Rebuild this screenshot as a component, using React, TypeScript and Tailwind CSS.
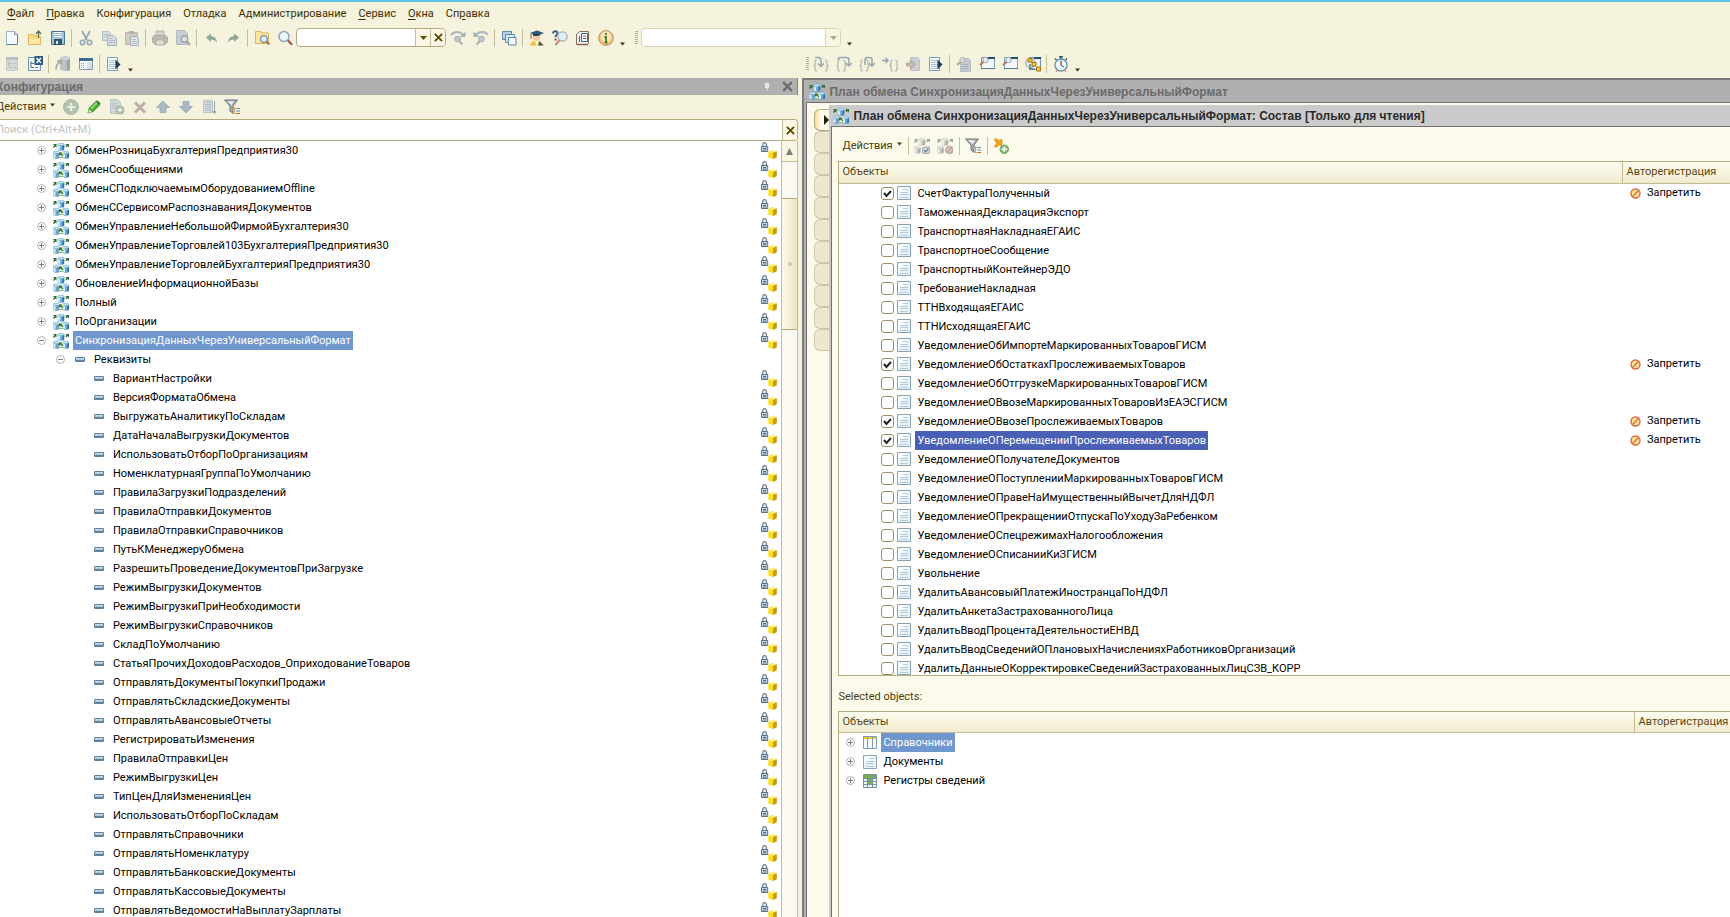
import React, { useState } from 'react';
import clsx from 'clsx';

type IconProps = { className?: string };
type TreeItem = { name: string; level: number; kind: 'plan' | 'attr'; expander?: 'plus' | 'minus'; locked?: boolean };
type DocItem = { name: string; checked?: boolean };

const PLAN_NAME = 'СинхронизацияДанныхЧерезУниверсальныйФормат';
const SELECTED_DOC = 'УведомлениеОПеремещенииПрослеживаемыхТоваров';

const plans = [
    'ОбменРозницаБухгалтерияПредприятия30',
    'ОбменСообщениями',
    'ОбменСПодключаемымОборудованиемOffline',
    'ОбменССервисомРаспознаванияДокументов',
    'ОбменУправлениеНебольшойФирмойБухгалтерия30',
    'ОбменУправлениеТорговлей103БухгалтерияПредприятия30',
    'ОбменУправлениеТорговлейБухгалтерияПредприятия30',
    'ОбновлениеИнформационнойБазы',
    'Полный',
    'ПоОрганизации',
];

const attributes = [
    'ВариантНастройки',
    'ВерсияФорматаОбмена',
    'ВыгружатьАналитикуПоСкладам',
    'ДатаНачалаВыгрузкиДокументов',
    'ИспользоватьОтборПоОрганизациям',
    'НоменклатурнаяГруппаПоУмолчанию',
    'ПравилаЗагрузкиПодразделений',
    'ПравилаОтправкиДокументов',
    'ПравилаОтправкиСправочников',
    'ПутьКМенеджеруОбмена',
    'РазрешитьПроведениеДокументовПриЗагрузке',
    'РежимВыгрузкиДокументов',
    'РежимВыгрузкиПриНеобходимости',
    'РежимВыгрузкиСправочников',
    'СкладПоУмолчанию',
    'СтатьяПрочихДоходовРасходов_ОприходованиеТоваров',
    'ОтправлятьДокументыПокупкиПродажи',
    'ОтправлятьСкладскиеДокументы',
    'ОтправлятьАвансовыеОтчеты',
    'РегистрироватьИзменения',
    'ПравилаОтправкиЦен',
    'РежимВыгрузкиЦен',
    'ТипЦенДляИзмененияЦен',
    'ИспользоватьОтборПоСкладам',
    'ОтправлятьСправочники',
    'ОтправлятьНоменклатуру',
    'ОтправлятьБанковскиеДокументы',
    'ОтправлятьКассовыеДокументы',
    'ОтправлятьВедомостиНаВыплатуЗарплаты',
];

const tree: TreeItem[] = [
    ...plans.map((name): TreeItem => ({ name, level: 0, kind: 'plan', expander: 'plus', locked: true })),
    { name: PLAN_NAME, level: 0, kind: 'plan', expander: 'minus', locked: true },
    { name: 'Реквизиты', level: 1, kind: 'attr', expander: 'minus' },
    ...attributes.map((name): TreeItem => ({ name, level: 2, kind: 'attr', locked: true })),
];

const documents: DocItem[] = [
    { name: 'СчетФактураПолученный', checked: true },
    { name: 'ТаможеннаяДекларацияЭкспорт' },
    { name: 'ТранспортнаяНакладнаяЕГАИС' },
    { name: 'ТранспортноеСообщение' },
    { name: 'ТранспортныйКонтейнерЭДО' },
    { name: 'ТребованиеНакладная' },
    { name: 'ТТНВходящаяЕГАИС' },
    { name: 'ТТНИсходящаяЕГАИС' },
    { name: 'УведомлениеОбИмпортеМаркированныхТоваровГИСМ' },
    { name: 'УведомлениеОбОстаткахПрослеживаемыхТоваров', checked: true },
    { name: 'УведомлениеОбОтгрузкеМаркированныхТоваровГИСМ' },
    { name: 'УведомлениеОВвозеМаркированныхТоваровИзЕАЭСГИСМ' },
    { name: 'УведомлениеОВвозеПрослеживаемыхТоваров', checked: true },
    { name: SELECTED_DOC, checked: true },
    { name: 'УведомлениеОПолучателеДокументов' },
    { name: 'УведомлениеОПоступленииМаркированныхТоваровГИСМ' },
    { name: 'УведомлениеОПравеНаИмущественныйВычетДляНДФЛ' },
    { name: 'УведомлениеОПрекращенииОтпускаПоУходуЗаРебенком' },
    { name: 'УведомлениеОСпецрежимахНалогообложения' },
    { name: 'УведомлениеОСписанииКиЗГИСМ' },
    { name: 'Увольнение' },
    { name: 'УдалитьАвансовыйПлатежИностранцаПоНДФЛ' },
    { name: 'УдалитьАнкетаЗастрахованногоЛица' },
    { name: 'УдалитьВводПроцентаДеятельностиЕНВД' },
    { name: 'УдалитьВводСведенийОПлановыхНачисленияхРаботниковОрганизаций' },
    { name: 'УдалитьДанныеОКорректировкеСведенийЗастрахованныхЛицСЗВ_КОРР' },
];

/* ---------- icons ---------- */

const Svg: React.FC<React.PropsWithChildren<IconProps>> = ({ className, children }) => (
    <svg viewBox="0 0 16 16" className={clsx('size-4 shrink-0', className)} fill="none" aria-hidden="true">{children}</svg>
);

const Cylinder: React.FC<{ x: number; y: number }> = ({ x, y }) => (
    <g transform={`translate(${x} ${y})`}>
        <path d="M0 1.2v5c0 .9 1.300 1.500 3.250 1.500s3.250-.6 3.250-1.500v-5z" fill="#69a8d6" />
        <path d="M.4 1.500v4.800c.5.500 1.200.8 2.100.9V2z" fill="#d8eefa" />
        <path d="M4.800 2v5.400c1-.2 1.700-.6 1.700-1.200v-5z" fill="#2f70a6" />
        <ellipse cx="3.250" cy="1.400" rx="3.100" ry="1.300" fill="#bfe1f5" stroke="#5b9ac6" strokeWidth=".5" />
    </g>
);

const PlanIcon: React.FC<IconProps> = ({ className }) => (
    <Svg className={className}>
        <Cylinder x={4.7} y={0} />
        <Cylinder x={0} y={8} />
        <Cylinder x={9.5} y={8} />
        <path d="M0 1h3.500v3.500L2.400 3.400 1 5 0 4l1.400-1.600zM16 1h-3.500l1 1-1.200 1.200 1 1 1.200-1.200L16 4.500z" fill="#2f6b2c" />
        <path d="M5.500 9h4.800v6H5.500z" fill="#e3f0dc" />
        <path d="M5.800 9.500h3.700l-1 1 1.800 1.800-1 1-1.800-1.800-1.700 1.700z" fill="#2b6f28" />
        <path d="M6 14.500h4" stroke="#86b681" />
    </Svg>
);

const DocIcon: React.FC<IconProps> = ({ className }) => (
    <svg viewBox="0 0 14 14" className={clsx('size-[14px] shrink-0', className)} fill="none" aria-hidden="true">
        <path d="M.5.5h13v13H.5z" fill="#e6f1f8" stroke="#8aa2b4" />
        <path d="M1 1h11L1 11z" fill="#fafdfe" />
        <path d="M6 3.500h5M3 6.500h8M3 8.500h8M3 11.500h8" stroke="#b3cddd" />
    </svg>
);

const AttrIcon = () => (
    <svg viewBox="0 0 10 5" className="h-[5px] w-[10px] shrink-0" aria-hidden="true">
        <rect width="10" height="5" rx="1" fill="#5f8299" />
        <path d="M1 1h8v2H1z" fill="#a9c9dc" />
        <path d="M1 1.500h8" stroke="#c4dcea" />
    </svg>
);

const LockIcon = () => (
    <svg viewBox="0 0 16 17" className="h-[17px] w-4 shrink-0" fill="none" aria-hidden="true">
        <path d="M1.800 5V2.600C1.800 1.300 2.600.7 3.600.7s1.800.6 1.800 1.900V5" stroke="#5f7284" strokeWidth="1.200" />
        <path d="M.5 4.500h6.200v5H.5z" fill="#c4d4e0" stroke="#5a7083" />
        <path d="M2 6.500h3.200M2 8h3.200" stroke="#5b7489" />
        <path d="M7.300 9.300 11.500 7.800l4.300 1.400-3.800 1.600z" fill="#fff07a" />
        <path d="M7.300 9.300 12 10.800V17l-4.700-1.600z" fill="#fadf22" />
        <path d="M12 10.800 15.800 9.200v6L12 17z" fill="#c79a10" />
    </svg>
);

const Expander: React.FC<{ open?: boolean }> = ({ open }) => (
    <svg viewBox="0 0 9 9" className="size-[9px] shrink-0" fill="none" aria-hidden="true">
        <circle cx="4.500" cy="4.500" r="4" fill="#fff" stroke="#b0b0b0" />
        <path d={open ? 'M2 4.500h5' : 'M2 4.500h5M4.500 2v5'} stroke="#7c7c7c" />
    </svg>
);

const ForbidIcon = () => (
    <svg viewBox="0 0 11 11" className="size-[11px] shrink-0" aria-hidden="true">
        <circle cx="5.500" cy="5.500" r="4.500" fill="#ffe49a" stroke="#dc6a3c" strokeWidth="1.400" />
        <path d="m2.600 8.400 5.800-5.800" stroke="#dc6a3c" strokeWidth="1.400" />
    </svg>
);

const Caret: React.FC<IconProps> = ({ className }) => (
    <svg viewBox="0 0 7 4" className={clsx('h-1 shrink-0', className ?? 'w-[7px]')} aria-hidden="true"><path d="M0 0h7L3.500 4z" fill="currentColor" /></svg>
);

const Cross: React.FC<IconProps> = ({ className }) => (
    <svg viewBox="0 0 10 10" className={clsx('shrink-0', className)} fill="none" aria-hidden="true"><path d="m1 1 8 8M9 1 1 9" stroke="currentColor" strokeWidth="2" /></svg>
);

const NewIcon = () => (
    <Svg><path d="M2.500 1.500h8l3 3v10h-11z" fill="#f4fafd" stroke="#9db6c7" /><path d="M2.500 14.500h11V5" stroke="#5d7f98" /><path d="M10.500 1.500v3h3" fill="#c4dae8" stroke="#7f9db2" /></Svg>
);
const OpenIcon = () => (
    <Svg><path d="M1.500 14.500v-10h5l1 1.500h5l1 1v7.500z" fill="#fbdc86" stroke="#dfb356" /><path d="M2 9h11v5H2z" fill="#ffe9a8" /><path d="M11.500 8V2M9 4l2.500-3L14 4" stroke="#5a6d50" strokeWidth="1.200" /></Svg>
);
const SaveIcon = () => (
    <Svg><path d="M1.500 1.500h13v13h-13z" fill="#a3c3d8" stroke="#4b748f" /><path d="M4 2h8v5H4z" fill="#f2f8fb" /><path d="M4 3.500h8M4 5.500h8" stroke="#9ab3c3" /><path d="M4.500 9.500h7v5h-7z" fill="#365b74" stroke="#2c4c62" /><path d="M6 11h2v3H6z" fill="#e3eef5" /></Svg>
);
const CutIcon = () => (
    <Svg><path d="m4 1 5 9M12 1l-5 9" stroke="#93a7b4" strokeWidth="1.800" /><circle cx="4.500" cy="12.500" r="2.200" stroke="#93a7b4" strokeWidth="1.600" /><circle cx="11.500" cy="12.500" r="2.200" stroke="#93a7b4" strokeWidth="1.600" /></Svg>
);
const CopyIcon = () => (
    <Svg><path d="M1.500 1.500h6l2 2v7h-8z" fill="#d5dde0" stroke="#b3bfc6" /><path d="M3 4.500h4M3 6.500h4" stroke="#b3bfc6" /><path d="M6.500 5.500h6l3 3v7h-9z" fill="#d5dde0" stroke="#a3b2bb" /><path d="M8 8.500h4M8 10.500h6M8 12.500h6" stroke="#b3bfc6" /></Svg>
);
const PasteIcon = () => (
    <Svg><path d="M1.500 2.500h12v12h-12z" fill="#d3ccbf" stroke="#bdb4a4" /><path d="M5 1h5v3H5z" fill="#a9b4ba" /><path d="M6.500 6.500h6l2 2v7h-8z" fill="#dfe5e7" stroke="#a3b2bb" /><path d="M8 9.500h4M8 11.500h5M8 13.500h5" stroke="#b3bfc6" /></Svg>
);
const PrintIcon = () => (
    <Svg><path d="M4 1h8v5H4z" fill="#cdd3d5" stroke="#b3babc" /><path d="M2 5.500h12l1.500 2v4.500L13 14.500H3L.5 12V7.500z" fill="#bcbab4" stroke="#aba9a3" /><path d="M4 10h8v5H4z" fill="#e2dbd2" stroke="#b5ab9f" /><path d="M12 8h1.500" stroke="#c08f76" strokeWidth="1.500" /></Svg>
);
const PreviewIcon = () => (
    <Svg><path d="M1.500.5h8l3 3v11h-11z" fill="#c8cfd3" stroke="#b3bec4" /><circle cx="9.500" cy="9" r="3.200" fill="#dbe1e3" stroke="#98a3aa" strokeWidth="1.400" /><path d="m12 11.500 3 3.500" stroke="#b69a8c" strokeWidth="2" /></Svg>
);
const UndoIcon = () => (
    <Svg><path d="M3 7.500 8 3.500v2.700c3.500 0 5.500 2 6 6.300-2-2.300-3.500-2.900-6-2.900v2.400z" fill="#8ea898" /></Svg>
);
const RedoIcon = () => (
    <Svg><path d="M13 7.500 8 3.500v2.700c-3.500 0-5.500 2-6 6.300 2-2.300 3.500-2.900 6-2.900v2.400z" fill="#8ea898" /></Svg>
);
const FindFolderIcon = () => (
    <Svg><path d="M1.500 13.500v-12h5l1 1.500h7v10.500z" fill="#fde7a0" stroke="#dcb45a" /><circle cx="10" cy="9" r="3.300" fill="#dfeffa" stroke="#7c93ab" strokeWidth="1.300" /><path d="m12.500 11.500 2.800 3" stroke="#b06a50" strokeWidth="2" /></Svg>
);
const MagnifierIcon = () => (
    <Svg><circle cx="7" cy="6.500" r="5" fill="#eaf4fb" stroke="#8fa3ba" strokeWidth="1.500" /><path d="M4.500 6a3 3 0 0 1 3-2.500" stroke="#fff" /><path d="m10.800 10.200 4.200 4.600" stroke="#a3564a" strokeWidth="2.200" /></Svg>
);
const FindNextIcon: React.FC<IconProps> = ({ className }) => (
    <Svg className={className}><path d="M1 5c3-4 9-4 12 0" stroke="#a9b6bf" strokeWidth="2" /><path d="M15.500 1.500V7H10z" fill="#a3b1ba" /><circle cx="7.500" cy="9" r="2.700" fill="#c3c7d3" stroke="#aeb5c0" strokeWidth="1.300" /><path d="m9.500 11.500 3 3" stroke="#b9a7a3" strokeWidth="2" /></Svg>
);
const WindowsIcon = () => (
    <Svg><path d="M1.500 1.500h9v8h-9z" fill="#b5d2e3" stroke="#5f8ba6" /><path d="M4.500 4.500h9v8h-9z" fill="#d8e9f2" stroke="#5f8ba6" /><path d="M7.500 7.500h7.500v7.500H7.500z" fill="#f5fafc" stroke="#5f8ba6" /></Svg>
);
const StudentIcon = () => (
    <Svg><circle cx="7.500" cy="7" r="3.500" fill="#f7c99b" /><path d="M1 15.500c.5-3.500 3-5 6-5s6.500 1.500 7.500 5z" fill="#f0c544" /><path d="m6 11 2 4.500 2-4.500z" fill="#fff" /><path d="m10 11 4.500 4.500h-5z" fill="#2d5672" /><path d="M1 3 8 .5 15 3 8 6z" fill="#2c5a7c" /><path d="M4 4v2l7-.5V4z" fill="#1d4059" /><path d="M2 3.500V9" stroke="#a0602c" /></Svg>
);
const HelpSearchIcon = () => (
    <Svg><path d="M1 3.500C1 .5 6 .5 5.500 3.500 5.300 5 3.500 5 3.500 7M3.500 8.500v2" stroke="#2c5a7c" strokeWidth="1.800" /><circle cx="10.500" cy="6.500" r="4.700" fill="#dceefa" stroke="#b3a9ab" strokeWidth="1.300" /><path d="m7.500 10-4 5" stroke="#c98e77" strokeWidth="2.200" /></Svg>
);
const BookIcon = () => (
    <Svg><path d="M4.500 1.500h9v12l-1 1h-11v-10z" fill="#eef5fa" stroke="#8a6a58" /><path d="M2 14.500h11" stroke="#9a5b40" strokeWidth="1.500" /><path d="M6.500 3.500h6v8h-6z" fill="#fff" stroke="#2d6690" /><path d="M8 6h3" stroke="#c64734" /><path d="M8 8.500h3" stroke="#2d6690" /><path d="M4.500 6v6" stroke="#2d6690" /></Svg>
);
const InfoIcon = () => (
    <Svg><circle cx="8" cy="8" r="7.300" fill="#fbc77c" stroke="#b48757" /><circle cx="8" cy="6.500" r="5.200" fill="#fde5bd" /><path d="M8 3v2M6.500 7H8v5.500M6.500 12.500h3" stroke="#3f7a2d" strokeWidth="1.800" /></Svg>
);

const TreeDocIcon = () => (
    <Svg className="opacity-60"><path d="M2.500 1.500h11v13h-11z" fill="#c3cbd0" stroke="#a6b3bb" /><path d="M2 2.500h12" stroke="#8397a5" strokeWidth="2" /><path d="M5 5v6.500h3M5 7.500h3M9.500 7.500h3M9.500 11.500h3" stroke="#8595a0" /></Svg>
);
const TreeCloseIcon = () => (
    <Svg><path d="M1.500 1.500h12v13h-12z" fill="#f4f9fc" stroke="#6b93ad" /><path d="M4 5v6.500h3M4 7.500h3M8 11.500h3" stroke="#53718a" /><path d="M7.500 0H16v9H7.500z" fill="#275b7f" /><path d="m9.500 2 4.500 5m0-5-4.500 5" stroke="#fff" strokeWidth="1.400" /></Svg>
);
const DbIcon = () => (
    <Svg><path d="M5 2v11c0 1.300 2.500 2 5 2s5-.7 5-2V2z" fill="#bac2c7" /><path d="M12 3v12c2-.3 3-1 3-2V2z" fill="#98a4ac" /><ellipse cx="10" cy="2.500" rx="5" ry="1.800" fill="#d0d6d9" stroke="#a2adb4" strokeWidth=".6" /><path d="M1 14c0-4 1-6.500 4-8M2 5l4-.5V8" stroke="#9bab9e" strokeWidth="1.500" /></Svg>
);
const PaletteIcon = () => (
    <Svg><path d="M1.500 2.500h13v11h-13z" fill="#fafcfd" stroke="#7f9bae" /><path d="M1 2h14v3H1z" fill="#3f6c8b" /><path d="M9 6h5v7H9z" fill="#cfdee8" /><path d="M3 7.500h4M3 9.500h4M3 11.500h4" stroke="#b4945e" strokeDasharray="1 1" /></Svg>
);
const DebugDocIcon = () => (
    <Svg><path d="M1.500 1.500h10v13h-10z" fill="#f8fbfd" stroke="#7ba1b9" /><path d="M3 4.500h7M3 6.500h7M3 8.500h7M3 10.500h7M3 12.500h7" stroke="#a9c3d4" /><path d="M9.500 3.500v10l5-5z" fill="#1d3e56" /></Svg>
);
// braces stand at l and r, the arrow shows where the debugger steps
const BraceIcon: React.FC<{ l: number; r: number; arrow: string }> = ({ l, r, arrow }) => (
    <Svg>
        <path d={`M${l + 3} 4q-2 0-2 2v2.500l-1 1 1 1v2.500q0 2 2 2M${r - 3} 4q2 0 2 2v2.500l1 1-1 1v2.500q0 2-2 2`} stroke="#b3b5b0" strokeWidth="1.200" />
        <path d={arrow} stroke="#96a7b2" strokeWidth="1.500" />
    </Svg>
);
const RunToIcon = () => (
    <Svg><path d="M5.500 1.500h7l2 2v11h-9z" fill="#c9cfd2" stroke="#bac3c7" /><path d="M1.500 7h4V4l5 4.500-5 4.500v-3h-4z" fill="#cdb9ae" stroke="#b5a49a" /></Svg>
);
const FindDocIcon = () => (
    <Svg><path d="M4.500 2.500h8l2 2v11h-10z" fill="#c5cbce" stroke="#b5bec2" /><path d="M6 8.500h6M6 10.500h6M6 12.500h6" stroke="#a9b3b9" /><circle cx="6.500" cy="4" r="2.700" fill="#d5dadc" stroke="#aeb2b5" /><path d="M4.500 6 1 9" stroke="#bc9f94" strokeWidth="1.800" /></Svg>
);
const FindWindowIcon = () => (
    <Svg><path d="M2.500 1.500h13v11h-13z" fill="#f2f8fb" stroke="#7ba0b8" /><path d="M9 1h7v2H9z" fill="#1f5276" /><path d="M2 12.500h14" stroke="#4f7d9b" /><circle cx="6.500" cy="4" r="2.700" fill="#e4eff7" stroke="#9aa4b4" /><path d="M4.500 6 1 9" stroke="#bb7362" strokeWidth="1.800" /></Svg>
);
const StackIcon = () => (
    <Svg><path d="M4.500 1.500h11v12h-11z" fill="#eaf2f7" stroke="#7696ab" /><path d="M9 1h7v2H9z" fill="#1f5276" /><circle cx="5.500" cy="7" r="4.700" fill="#e3edf4" stroke="#8d9aa5" /><path d="M3 2.500h4v3.500H3zM7 6.500h4V10H7zM11.500 11h4v4h-4z" fill="#f7c535" stroke="#a77513" /><path d="M5 8v5h5" stroke="#39668b" strokeWidth="1.200" /></Svg>
);
const TimerIcon = () => (
    <Svg><circle cx="8" cy="9" r="6" fill="#eff6fa" stroke="#6a8ca3" strokeWidth="1.300" /><path d="M6 .8h4M8 1v2M2 2.500l1.500 1.500M14 2.500 12.500 4" stroke="#365a74" strokeWidth="1.400" /><path d="M8 4.500v4.800l3 1.700" stroke="#2e5674" /><path d="M8 5.500v3.500" stroke="#d15246" /><path d="M4 14.500 3 16M12 14.500l1 1.500" stroke="#c0523f" /></Svg>
);

const AddIcon = () => (
    <Svg><circle cx="8" cy="8" r="7.500" fill="#b3c2ac" stroke="#a9b9a3" /><path d="M8 4v8M4 8h8" stroke="#e9eee2" strokeWidth="2.200" /></Svg>
);
const PencilIcon = () => (
    <Svg><path d="m2 14 1.500-5L10 2.500l3.500 3.500L7 12.500z" fill="#4cb733" stroke="#27731f" /><path d="m5 9.500 6-6" stroke="#a9e68e" strokeWidth="1.500" /><path d="m2 14 1.200-3.800L6 13z" fill="#d9f2c2" /><path d="m10 2.500 1.200-1.200 3.500 3.500L13.500 6z" fill="#1e6d1c" /></Svg>
);
const AddDocIcon = () => (
    <Svg><path d="M1.500.5h7l3 3v11h-10z" fill="#cfd6d4" stroke="#b8c2c4" /><path d="M3 4.500h5M3 6.500h6M3 8.500h6" stroke="#b8c2c5" /><circle cx="11" cy="11" r="4.500" fill="#a8bba0" /><path d="M11 8.500v5M8.500 11h5" stroke="#eef2e8" strokeWidth="1.600" /></Svg>
);
const DeleteIcon = () => (
    <Svg><path d="m3 3.500 10 10M13 3.500l-10 10" stroke="#bfaeaa" strokeWidth="3" /></Svg>
);
const UpIcon: React.FC<IconProps> = ({ className }) => (
    <Svg className={className}><path d="M8 2l6.500 6.500H11v5H5v-5H1.500z" fill="#a9bac5" stroke="#9db0bc" /></Svg>
);
const SortIcon = () => (
    <Svg><path d="M2.500 1.500h9v12h-9z" fill="#d5dbdc" stroke="#bac3c6" /><path d="M4 3.500h6M4 5.500h6M4 7.500h6M4 9.500h6M4 11.500h6" stroke="#b3bdc3" /><path d="M13.500 2v11M12 12.500l1.500 2 1.500-2z" stroke="#98a8b3" fill="#98a8b3" /></Svg>
);
const FilterIcon = () => (
    <Svg><path d="M.5 1h13L9 7v7.500L6 12V7z" fill="#a9adb0" stroke="#70757a" /><path d="M3 2.200h7L7.500 6z" fill="#edf0f1" /><path d="M10.500 8v7M11 9.500h2M11 14.500h2" stroke="#d0ab68" /><path d="M13 9.500h3M12 12h4" stroke="#4b91c1" strokeWidth="1.200" /><path d="M13 14.500h3" stroke="#c95c3a" /></Svg>
);
const PlanCheckIcon: React.FC<{ forbid?: boolean }> = ({ forbid }) => (
    <Svg>
        <g className="opacity-55 grayscale"><Cylinder x={4.7} y={0} /><Cylinder x={0} y={8} /><Cylinder x={9.500} y={8} /></g>
        <path d="M0 1h3.500v3.500L2.400 3.400 1 5 0 4l1.400-1.600zM16 1h-3.500l1 1-1.200 1.200 1 1 1.200-1.200L16 4.500z" fill="#93a78d" />
        {forbid
            ? <><circle cx="12" cy="12" r="3.500" fill="#d8c4bb" stroke="#b39a90" /><path d="m9.500 14.500 5-5" stroke="#b39a90" /></>
            : <><path d="M8.500 9.500h7v6h-7z" fill="#d4dadd" stroke="#a6b4bc" /><path d="m10 12 1.500 2 3-3.500" stroke="#758a99" strokeWidth="1.300" /></>}
    </Svg>
);
const AddRefIcon = () => (
    <Svg><path d="M1 1h3l2 1.500L9 1v7l-2.500-1L4 9l-3-.500 2.500-3z" fill="#f5a51c" stroke="#d88409" strokeWidth=".6" /><circle cx="11.300" cy="11.300" r="4.200" fill="#7dbd68" stroke="#6a9a5a" /><path d="M11.300 8.500v5.600M8.500 11.300h5.600" stroke="#fff" strokeWidth="1.600" /></Svg>
);
const CatalogIcon = () => (
    <svg viewBox="0 0 14 14" className="size-[14px] shrink-0" fill="none" aria-hidden="true"><path d="M.5.5h13v12H.5z" fill="#f5fafd" stroke="#7f9bae" /><path d="M1 1h12v2H1z" fill="#ecc63d" /><path d="M4.500 1v12M9.500 1v12" stroke="#7f9bae" /></svg>
);
const RegisterIcon = () => (
    <svg viewBox="0 0 14 14" className="size-[14px] shrink-0" fill="none" aria-hidden="true"><path d="M.5.5h13v13H.5z" fill="#eff5f7" stroke="#7690a1" /><path d="M1 1h12v3H1zM5 5h4v5H5z" fill="#74b04f" /><path d="M1 4.500h12M1 7.500h12M1 10.500h12M4.500 1v12M9.500 1v12" stroke="#7690a1" /></svg>
);

/* ---------- toolbar parts ---------- */

const ToolButton: React.FC<React.PropsWithChildren<{ label: string; className?: string }>> = ({ label, className, children }) => (
    <button type="button" aria-label={label} title={label} className={clsx('flex h-6 shrink-0 items-center justify-center', className ?? 'w-[23px]')}>{children}</button>
);

const Sep = () => <span className="flex h-[18px] w-[5px] shrink-0 justify-center"><span className="w-px bg-[#c5bd9c]" /></span>;
const Grip = () => <span className="h-3.5 w-[3px] shrink-0 bg-[repeating-linear-gradient(#b5ad8c_0_1px,transparent_1px_2px)]" />;

const MoreButton = () => (
    <button type="button" aria-label="Ещё" className="flex h-5 w-[11px] shrink-0 items-end justify-center pb-0.5 text-[#3f2f00]"><Caret className="w-[5px]" /></button>
);

const ActionsButton: React.FC<IconProps> = ({ className }) => (
    <button type="button" className={clsx('flex shrink-0 items-center text-[#4a3a0a]', className)}>Действия<Caret className="-mt-1 ml-1 w-[5px]" /></button>
);

const menu: [string, string, string][] = [
    ['', 'Ф', 'айл'],
    ['', 'П', 'равка'],
    ['Конфигурация', '', ''],
    ['Отладка', '', ''],
    ['Администрирование', '', ''],
    ['', 'С', 'ервис'],
    ['', 'О', 'кна'],
    ['Сп', 'р', 'авка'],
];

const MenuBar = () => (
    <nav className="flex h-[23px] items-center gap-3 px-[7px] text-[#3f2f00]">
        {menu.map(([before, key, after]) => (
            <button key={before + key + after} type="button">{before}{key && <span className="underline underline-offset-2">{key}</span>}{after}</button>
        ))}
    </nav>
);

const MainToolbar = () => (
    <div className="flex h-[25px] items-center">
        <ToolButton label="Новый"><NewIcon /></ToolButton>
        <ToolButton label="Открыть"><OpenIcon /></ToolButton>
        <ToolButton label="Сохранить"><SaveIcon /></ToolButton>
        <Sep />
        <ToolButton label="Вырезать"><CutIcon /></ToolButton>
        <ToolButton label="Копировать"><CopyIcon /></ToolButton>
        <ToolButton label="Вставить"><PasteIcon /></ToolButton>
        <Sep />
        <ToolButton label="Печать"><PrintIcon /></ToolButton>
        <ToolButton label="Просмотр"><PreviewIcon /></ToolButton>
        <Sep />
        <ToolButton label="Отменить"><UndoIcon /></ToolButton>
        <ToolButton label="Вернуть"><RedoIcon /></ToolButton>
        <Sep />
        <ToolButton label="Глобальный поиск"><FindFolderIcon /></ToolButton>
        <ToolButton label="Найти"><MagnifierIcon /></ToolButton>
        <div className="flex h-[19px] w-[150px] shrink-0 overflow-hidden rounded border border-[#b5a97f] bg-white">
            <input aria-label="Строка поиска" className="w-full min-w-0 px-1 outline-none" />
            <button type="button" aria-label="История поиска" className="flex w-[15px] shrink-0 items-center justify-center border-l border-[#c9c09b] bg-[#f9f6e4] text-[#5c4700]"><Caret /></button>
            <button type="button" aria-label="Очистить" className="flex w-[15px] shrink-0 items-center justify-center border-l border-[#c9c09b] bg-[#f9f6e4] text-[#5c4700]"><Cross className="size-[9px]" /></button>
        </div>
        <ToolButton label="Найти далее"><FindNextIcon /></ToolButton>
        <ToolButton label="Найти ранее"><FindNextIcon className="-scale-x-100" /></ToolButton>
        <Sep />
        <ToolButton label="Окна"><WindowsIcon /></ToolButton>
        <Sep />
        <ToolButton label="Синтакс-помощник"><StudentIcon /></ToolButton>
        <ToolButton label="Поиск в справке"><HelpSearchIcon /></ToolButton>
        <ToolButton label="Справка"><BookIcon /></ToolButton>
        <ToolButton label="О программе"><InfoIcon /></ToolButton>
        <MoreButton />
        <div className="flex items-center gap-[3px] pl-[7px]">
            <Grip />
            <div className="flex h-[19px] w-[200px] overflow-hidden rounded border border-[#d9d3b8] bg-white">
                <input aria-label="Процедуры" className="w-full min-w-0 px-1 outline-none" />
                <button type="button" aria-label="Список процедур" className="flex w-[15px] shrink-0 items-center justify-center border-l border-[#d9d3b8] bg-[#f9f6e4] text-[#a9a48c]"><Caret /></button>
            </div>
            <MoreButton />
        </div>
    </div>
);

const DebugToolbar = () => (
    <div className="grid h-7 grid-cols-[6fr_7fr] items-center">
        <div className="flex min-w-0 items-center">
            <ToolButton label="Дерево"><TreeDocIcon /></ToolButton>
            <ToolButton label="Закрыть конфигурацию"><TreeCloseIcon /></ToolButton>
            <Sep />
            <ToolButton label="Обновить базу данных"><DbIcon /></ToolButton>
            <ToolButton label="Палитра свойств"><PaletteIcon /></ToolButton>
            <Sep />
            <ToolButton label="Начать отладку"><DebugDocIcon /></ToolButton>
            <MoreButton />
        </div>
        <div className="flex min-w-0 items-center pl-2">
            <Grip />
            <ToolButton label="Шагнуть в"><BraceIcon l={1} r={15} arrow="M2 1.500h3q3 0 3 3V10M5 7.500l3 3 3-3" /></ToolButton>
            <ToolButton label="Шагнуть через"><BraceIcon l={1} r={10} arrow="M2 4q0-2.500 2.500-2.500h6q2.500 0 2.500 2.500v5.500M10 7l3 3 3-3" /></ToolButton>
            <ToolButton label="Шагнуть из"><BraceIcon l={1} r={10} arrow="M6 9V4q0-2.500 2.500-2.500h2q2.500 0 2.500 2.500v5.500M10 7l3 3 3-3" /></ToolButton>
            <ToolButton label="Идти до курсора"><BraceIcon l={8} r={16} arrow="M0 4.500h5.500M3.500 2 6 4.500 3.500 7" /></ToolButton>
            <ToolButton label="Текущая строка"><RunToIcon /></ToolButton>
            <ToolButton label="Продолжить отладку"><DebugDocIcon /></ToolButton>
            <Sep />
            <ToolButton label="Вычислить выражение"><FindDocIcon /></ToolButton>
            <ToolButton label="Локальные переменные"><FindWindowIcon /></ToolButton>
            <ToolButton label="Табло"><FindWindowIcon /></ToolButton>
            <ToolButton label="Стек вызовов"><StackIcon /></ToolButton>
            <Sep />
            <ToolButton label="Замер производительности"><TimerIcon /></ToolButton>
            <MoreButton />
        </div>
    </div>
);

/* ---------- configuration tree ---------- */

const TreeRow: React.FC<{ item: TreeItem; selected: boolean; onSelect: () => void }> = ({ item, selected, onSelect }) => (
    <li className={clsx('flex h-[19px] items-center pr-1', item.level === 0 && 'pl-[37px]', item.level === 1 && 'pl-14', item.level === 2 && 'pl-[94px]')}>
        {item.expander && <button type="button" aria-label="Развернуть" className="shrink-0"><Expander open={item.expander === 'minus'} /></button>}
        {item.kind === 'plan'
            ? <span className="ml-[7px] mr-1"><PlanIcon /></span>
            : <span className={clsx('mr-[7px]', item.expander && 'ml-[10px]')}><AttrIcon /></span>}
        <button type="button" onClick={onSelect} className={clsx('h-[19px] whitespace-nowrap px-0.5', selected && 'bg-[#6f97ce] text-white')}>{item.name}</button>
        {item.locked && <span className="ml-auto"><LockIcon /></span>}
    </li>
);

const ConfigPanel = () => {
    const [selected, setSelected] = useState(PLAN_NAME);

    return (
        <section className="flex min-h-0 min-w-0 flex-col overflow-hidden">
            <header className="flex h-[17px] shrink-0 items-center justify-between border-r border-[#808080] bg-[#b0b0b0] pr-1 text-[#6a6a6a]">
                <h2 className="-ml-1 font-['Liberation_Sans',sans-serif] text-[12px] font-bold">Конфигурация</h2>
                <div className="flex items-center gap-3">
                    <button type="button" aria-label="Закрепить" className="flex w-1.5 justify-center"><svg viewBox="0 0 6 8" className="h-2 w-1.5" fill="none" aria-hidden="true"><path d="M1.500.5h3v4h-3zM3 4.500v3" fill="#ddd" stroke="#f2f2f2" /></svg></button>
                    <button type="button" aria-label="Закрыть"><Cross className="size-[11px]" /></button>
                </div>
            </header>
            <div className="flex h-6 shrink-0 items-center">
                <ActionsButton className="-ml-1 mr-1" />
                <ToolButton label="Добавить"><AddIcon /></ToolButton>
                <ToolButton label="Изменить"><PencilIcon /></ToolButton>
                <ToolButton label="Добавить копированием"><AddDocIcon /></ToolButton>
                <ToolButton label="Удалить"><DeleteIcon /></ToolButton>
                <ToolButton label="Вверх"><UpIcon /></ToolButton>
                <ToolButton label="Вниз"><UpIcon className="-scale-y-100" /></ToolButton>
                <ToolButton label="Сортировать"><SortIcon /></ToolButton>
                <ToolButton label="Отбор"><FilterIcon /></ToolButton>
            </div>
            <div className="flex h-[22px] shrink-0 overflow-hidden rounded-r border border-l-0 border-[#b5a97f] bg-white">
                <input aria-label="Поиск" placeholder="Поиск (Ctrl+Alt+M)" className="-ml-1 w-full min-w-0 outline-none placeholder:text-[#c2c2c2]" />
                <button type="button" aria-label="Очистить поиск" className="flex w-[15px] shrink-0 items-center justify-center border-l border-[#c9c09b] bg-[#f9f6e4] text-[#5c4700]"><Cross className="size-[9px]" /></button>
            </div>
            <div className="flex min-h-0 flex-1 bg-white">
                <ul className="min-w-0 flex-1 overflow-hidden">
                    {tree.map(item => <TreeRow key={item.name} item={item} selected={item.name === selected} onSelect={() => setSelected(item.name)} />)}
                </ul>
                <div className="flex w-[17px] shrink-0 flex-col border-x border-[#c5bc97] bg-[#faf9f2]">
                    <button type="button" aria-label="Прокрутить вверх" className="flex h-[21px] shrink-0 items-center justify-center border-b border-[#c5bc97] bg-[#f9f6e4]"><svg viewBox="0 0 7 7" className="size-[7px]" aria-hidden="true"><path d="M3.500 0 7 7H0z" fill="#7d7d7d" /></svg></button>
                    <div className="mt-9 flex h-[132px] items-center justify-center border-y border-[#b5a97f] bg-linear-to-r from-[#fbf9ec] to-[#ece5c3]"><span className="size-1 rounded-full bg-[#cfc8a8]" /></div>
                </div>
            </div>
        </section>
    );
};

/* ---------- exchange plan content ---------- */

const HeadRow: React.FC<{ narrow?: boolean }> = ({ narrow }) => (
    <thead>
        <tr className="h-[21px] bg-linear-to-b from-[#fcfbf0] to-[#f1ebcd] text-left text-[#5c4813]">
            <th className="border-b border-[#c5bc97] px-[3px] font-normal">Объекты</th>
            <th className={clsx('border-b border-l border-[#c5bc97] px-1 font-normal', narrow ? 'w-24' : 'w-[108px]')}>Авторегистрация</th>
        </tr>
    </thead>
);

const ObjectsTable = () => {
    const [checked, setChecked] = useState(() => documents.filter(d => d.checked).map(d => d.name));

    const toggle = (name: string) => {
        setChecked(prev => prev.includes(name) ? prev.filter(n => n !== name) : [...prev, name]);
    };

    return (
        <div className="min-h-0 flex-5 overflow-hidden border border-r-0 border-[#b5a97f] bg-white">
            <table className="w-full table-fixed border-collapse">
                <HeadRow />
                <tbody>
                    {documents.map(({ name }) => (
                        <tr key={name} className="h-[19px]">
                            <td className="p-0">
                                <label className="flex h-[19px] items-center whitespace-nowrap pl-[42px]">
                                    <span className="mr-[3px] grid size-[13px]">
                                        <input type="checkbox" checked={checked.includes(name)} onChange={() => toggle(name)} className="size-[13px] appearance-none rounded-[3px] border border-[#9c8f64] bg-white [grid-area:1/1]" />
                                        {checked.includes(name) && <svg viewBox="0 0 13 13" className="pointer-events-none size-[13px] [grid-area:1/1]" fill="none" aria-hidden="true"><path d="m3 6 2.500 3L10 4" stroke="#222" strokeWidth="2" /></svg>}
                                    </span>
                                    <DocIcon className="mr-1" />
                                    <span className={clsx('px-0.5 leading-[19px]', name === SELECTED_DOC && 'bg-[#4960b6] text-white')}>{name}</span>
                                </label>
                            </td>
                            <td className="p-0">
                                {checked.includes(name) && <div className="flex items-center gap-1.5 pl-2"><ForbidIcon />Запретить</div>}
                            </td>
                        </tr>
                    ))}
                </tbody>
            </table>
        </div>
    );
};

const groups = [
    { name: 'Справочники', icon: <CatalogIcon /> },
    { name: 'Документы', icon: <DocIcon /> },
    { name: 'Регистры сведений', icon: <RegisterIcon /> },
];

const SelectedTable = () => (
    <div className="min-h-0 flex-2 overflow-hidden border border-b-0 border-r-0 border-[#b5a97f] bg-white">
        <table className="w-full table-fixed border-collapse">
            <HeadRow narrow />
            <tbody>
                {groups.map(({ name, icon }, i) => (
                    <tr key={name} className="h-[19px]">
                        <td className="p-0">
                            <div className="flex h-[19px] items-center pl-[7px]">
                                <button type="button" aria-label="Развернуть" className="mr-2"><Expander /></button>
                                {icon}
                                <span className={clsx('ml-1 px-0.5 leading-[19px]', i === 0 && 'bg-[#6f97ce] text-white')}>{name}</span>
                            </div>
                        </td>
                        <td />
                    </tr>
                ))}
            </tbody>
        </table>
    </div>
);

const PlanWindow = () => (
    <section className="flex min-h-0 min-w-0 flex-1 flex-col border-l-2 border-[#c9c9c9]">
        <header className="flex h-[22px] shrink-0 items-center gap-1 border-b border-[#6f6f6f] bg-[#cbcbcb] pl-0.5 text-[#2b2b2b]">
            <PlanIcon />
            <h2 className="whitespace-nowrap font-['Liberation_Sans',sans-serif] text-[12px] font-bold">План обмена {PLAN_NAME}: Состав [Только для чтения]</h2>
        </header>
        <div className="flex min-h-0 flex-1 flex-col border-l border-[#6f6f6f] bg-[#fcfaeb] pl-1.5">
            <div className="flex h-[34px] shrink-0 items-center pl-1 pt-1">
                <ActionsButton className="mr-1" />
                <Sep />
                <ToolButton label="Включить"><PlanCheckIcon /></ToolButton>
                <ToolButton label="Исключить"><PlanCheckIcon forbid /></ToolButton>
                <Sep />
                <ToolButton label="Отбор"><FilterIcon /></ToolButton>
                <Sep />
                <ToolButton label="Добавить подчинённые"><AddRefIcon /></ToolButton>
            </div>
            <ObjectsTable />
            <p className="flex h-[35px] shrink-0 items-center pt-2 text-[#4a3a0a]">Selected objects:</p>
            <SelectedTable />
        </div>
    </section>
);

const Workspace = () => (
    <main className="flex min-h-0 min-w-0 flex-col overflow-hidden border-l-2 border-t-2 border-[#7b7b7b] bg-[#b0b0b0] pl-0.5">
        <header className="flex h-[22px] shrink-0 items-center gap-1 pl-[3px] pt-0.5 text-[#6a6a6a]">
            <PlanIcon />
            <h1 className="whitespace-nowrap font-['Liberation_Sans',sans-serif] text-[12px] font-bold">План обмена {PLAN_NAME}</h1>
        </header>
        <div className="flex min-h-0 flex-1 border-l border-t border-[#6f6f6f] bg-[#fcfaeb] pl-[7px] pt-0.5">
            <div className="flex w-[15px] shrink-0 flex-col pt-1">
                {Array.from({ length: 11 }, (_, i) => (
                    <button key={i} type="button" aria-label={`Закладка ${i + 1}`} className={clsx('flex h-[22px] shrink-0 items-center justify-end rounded-l-md border border-r-0', i === 0 ? 'border-[#b5a97f] bg-linear-to-r from-[#fbd98f] to-[#fcfaeb] to-40%' : 'border-[#cdc5a6] bg-[#ede7cf]')}>
                        {i === 0 && <svg viewBox="0 0 5 10" className="h-2.5 w-[5px]" aria-hidden="true"><path d="m0 0 5 5-5 5z" fill="#1e1e1e" /></svg>}
                    </button>
                ))}
            </div>
            <PlanWindow />
        </div>
    </main>
);

const App: React.FC = () => (
    <div className="flex h-screen flex-col overflow-hidden border-t-2 border-[#5cc3e3] bg-[#f5f2dd] font-['Roboto','Liberation_Sans',sans-serif] text-[11px] leading-4 text-black">
        <MenuBar />
        <MainToolbar />
        <DebugToolbar />
        <div className="grid min-h-0 flex-1 grid-cols-[6fr_7fr] grid-rows-[minmax(0,1fr)]">
            <ConfigPanel />
            <div className="grid min-h-0 min-w-0 pl-1">
                <Workspace />
            </div>
        </div>
    </div>
);

export default App;
